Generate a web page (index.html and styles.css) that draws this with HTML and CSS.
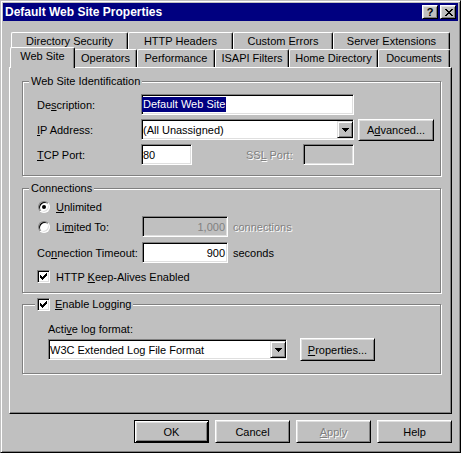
FILE: index.html
```html
<!DOCTYPE html>
<html lang="en">
<head>
<meta charset="utf-8">
<title>Default Web Site Properties</title>
<link rel="stylesheet" href="styles.css">
</head>
<body>
<div class="window">
  <div class="titlebar">
    <span class="title">Default Web Site Properties</span>
    <div class="caption-buttons">
      <span class="cap-btn cap-help">?</span>
      <span class="cap-btn cap-close">
        <svg width="8" height="7" viewBox="0 0 8 7" shape-rendering="crispEdges"><path d="M0 0h2v1H0zM6 0h2v1H6zM1 1h2v1H1zM5 1h2v1H5zM2 2h4v1H2zM3 3h2v1H3zM2 4h4v1H2zM1 5h2v1H1zM5 5h2v1H5zM0 6h2v1H0zM6 6h2v1H6z"/></svg>
      </span>
    </div>
  </div>

  <div class="client">
    <div class="tabs">
      <div class="tab-row back">
        <div class="tab t-dirsec">Directory Security</div>
        <div class="tab t-http">HTTP Headers</div>
        <div class="tab t-errors">Custom Errors</div>
        <div class="tab t-ext">Server Extensions</div>
      </div>
      <div class="tab-row front">
        <div class="tab t-site selected">Web Site</div>
        <div class="tab t-ops">Operators</div>
        <div class="tab t-perf">Performance</div>
        <div class="tab t-isapi">ISAPI Filters</div>
        <div class="tab t-home">Home Directory</div>
        <div class="tab t-docs">Documents</div>
      </div>
    </div>

    <div class="panel">
      <div class="group g-ident">
        <div class="group-label">Web Site Identification</div>
        <div class="row">
          <span class="lbl">De<u>s</u>cription:</span>
          <div class="field w-wide"><span class="sel">Default Web Site</span></div>
        </div>
        <div class="row">
          <span class="lbl"><u>I</u>P Address:</span>
          <div class="field combo w-wide">
            <span class="combo-text">(All Unassigned)</span>
            <span class="drop-btn"><svg width="7" height="4" viewBox="0 0 7 4" shape-rendering="crispEdges"><path d="M0 0h7v1H0zM1 1h5v1H1zM2 2h3v1H2zM3 3h1v1H3z"/></svg></span>
          </div>
          <span class="btn btn-adv">A<u>d</u>vanced...</span>
        </div>
        <div class="row">
          <span class="lbl"><u>T</u>CP Port:</span>
          <div class="field w-port">80</div>
          <span class="lbl-ssl disabled">SS<u>L</u> Port:</span>
          <div class="field w-port off"></div>
        </div>
      </div>

      <div class="group g-conn">
        <div class="group-label">Connections</div>
        <div class="crow r-unl">
          <span class="radio on"></span><span><u>U</u>nlimited</span>
        </div>
        <div class="crow r-lim">
          <span class="lbl2"><span class="radio"></span><span>Li<u>m</u>ited To:</span></span>
          <div class="field num off">1,000</div>
          <span class="unit disabled">connections</span>
        </div>
        <div class="crow r-time">
          <span class="lbl2">Co<u>n</u>nection Timeout:</span>
          <div class="field num">900</div>
          <span class="unit">seconds</span>
        </div>
        <div class="crow r-keep">
          <span class="check"><svg width="7" height="7" viewBox="0 0 7 7" shape-rendering="crispEdges"><path d="M6 0h1v1H6zM5 1h2v1H5zM0 2h1v1H0zM4 2h3v1H4zM0 3h2v1H0zM3 3h3v1H3zM0 4h5v1H0zM1 5h3v1H1zM2 6h1v1H2z"/></svg></span>
          <span>HTTP <u>K</u>eep-Alives Enabled</span>
        </div>
      </div>

      <div class="group g-log">
        <div class="group-label legend-check">
          <span class="check"><svg width="7" height="7" viewBox="0 0 7 7" shape-rendering="crispEdges"><path d="M6 0h1v1H6zM5 1h2v1H5zM0 2h1v1H0zM4 2h3v1H4zM0 3h2v1H0zM3 3h3v1H3zM0 4h5v1H0zM1 5h3v1H1zM2 6h1v1H2z"/></svg></span>
          <span><u>E</u>nable Logging</span>
        </div>
        <div class="log-label">Acti<u>v</u>e log format:</div>
        <div class="log-row">
          <div class="field combo w-log">
            <span class="combo-text">W3C Extended Log File Format</span>
            <span class="drop-btn"><svg width="7" height="4" viewBox="0 0 7 4" shape-rendering="crispEdges"><path d="M0 0h7v1H0zM1 1h5v1H1zM2 2h3v1H2zM3 3h1v1H3z"/></svg></span>
          </div>
          <span class="btn btn-props"><u>P</u>roperties...</span>
        </div>
      </div>
    </div>

    <div class="dialog-buttons">
      <span class="btn default">OK</span>
      <span class="btn">Cancel</span>
      <span class="btn disabled"><u>A</u>pply</span>
      <span class="btn">Help</span>
    </div>
  </div>
</div>
</body>
</html>
```

FILE: styles.css
```css
* { box-sizing: border-box; }

html, body {
  margin: 0;
  padding: 0;
}

body {
  width: 461px;
  height: 453px;
  overflow: hidden;
  background: #c0c0c0;
  color: #000;
  font: 11px "Liberation Sans", Arial, sans-serif;
}

u { text-underline-offset: 1px; }

/* Outer dialog frame */
.window {
  width: 461px;
  height: 453px;
  display: flex;
  flex-direction: column;
  padding: 2px;
  background: #c0c0c0;
  border: 1px solid;
  border-color: #c0c0c0 #000 #000 #c0c0c0;
  box-shadow: inset 1px 1px #fff, inset -1px -1px #808080;
}

.titlebar {
  height: 18px;
  flex: none;
  display: flex;
  align-items: center;
  padding: 0 2px;
  background: #000080;
  color: #fff;
}

.title {
  flex: 1;
  font-size: 12px;
  font-weight: bold;
  white-space: nowrap;
}

.caption-buttons {
  display: flex;
  gap: 2px;
}

.cap-btn {
  width: 16px;
  height: 14px;
  display: flex;
  align-items: center;
  justify-content: center;
  background: #c0c0c0;
  color: #000;
  border: 1px solid;
  border-color: #fff #000 #000 #fff;
  box-shadow: inset 1px 1px #dfdfdf, inset -1px -1px #808080;
}

.cap-help {
  font-weight: bold;
  font-size: 11px;
  line-height: 1;
}

.cap-close svg { display: block; margin-left: 1px; }

/* Dialog body */
.client {
  flex: 1;
  display: flex;
  flex-direction: column;
  padding: 11px 6px 0 6px;
}

/* Multi-row tab strip */
.tabs {
  margin-left: 2px;
  width: 439px;
}

.tab-row { display: flex; }
.tab-row.back { height: 17px; }
.tab-row.front { height: 18px; }

.tab {
  flex: none;
  height: 100%;
  background: #c0c0c0;
  border-top: 1px solid #fff;
  border-left: 1px solid #fff;
  border-right: 1px solid #000;
  border-radius: 2px 2px 0 0;
  box-shadow: inset -1px 0 #808080;
  text-align: center;
  line-height: 16px;
  white-space: nowrap;
}

.tab.selected {
  position: relative;
  z-index: 2;
  height: 21px;
  margin: -2px -1px 0 -1px;
}

.t-dirsec { width: 117px; }
.t-http   { width: 105px; }
.t-errors { width: 100px; }
.t-ext    { width: 117px; }

.t-site  { width: 65px; }
.t-ops   { width: 63px; }
.t-perf  { width: 78px; }
.t-isapi { width: 74px; }
.t-home  { width: 89px; }
.t-docs  { width: 72px; }

.panel {
  flex: none;
  width: 443px;
  height: 347px;
  padding: 13px 0 0 12px;
  border: 1px solid;
  border-color: #fff #000 #000 #fff;
  box-shadow: inset -1px -1px #808080;
}

/* Etched group boxes */
.group {
  position: relative;
  width: 419px;
  border: 1px solid #808080;
  box-shadow: inset 1px 1px #fff, 1px 1px #fff;
}

.group-label {
  position: absolute;
  top: -7px;
  left: 6px;
  padding: 0 2px;
  line-height: 13px;
  background: #c0c0c0;
  white-space: nowrap;
}

.g-ident {
  height: 95px;
  padding: 12px 0 0 14px;
}

.g-conn {
  height: 105px;
  margin-top: 12px;
  padding: 11px 0 0 14px;
}

.g-log {
  height: 70px;
  margin-top: 11px;
  padding: 18px 0 0 25px;
}

.row {
  display: flex;
  align-items: center;
  height: 21px;
}

.row + .row { margin-top: 4px; }

.lbl {
  width: 104px;
  flex: none;
}

.lbl-ssl {
  width: 57px;
  margin-left: 54px;
}

.disabled {
  color: #808080;
  text-shadow: 1px 1px #fff;
}

/* Sunken edit fields */
.field {
  height: 21px;
  flex: none;
  display: flex;
  align-items: center;
  padding: 0 2px 0 1px;
  background: #fff;
  white-space: nowrap;
  border: 1px solid;
  border-color: #808080 #fff #fff #808080;
  box-shadow: inset 1px 1px #000, inset -1px -1px #dfdfdf;
}

.field.off {
  background: #c0c0c0;
  color: #808080;
}

.w-wide { width: 213px; }
.w-port { width: 51px; }
.w-log  { width: 239px; }

.sel {
  display: inline-block;
  margin-left: -1px;
  padding: 0 1px;
  line-height: 15px;
  background: #000080;
  color: #fff;
}

.combo { padding-right: 0; }

.combo-text { flex: 1; }

.drop-btn {
  width: 16px;
  height: 17px;
  display: flex;
  align-items: center;
  justify-content: center;
  background: #c0c0c0;
  border: 1px solid;
  border-color: #dfdfdf #000 #000 #dfdfdf;
  box-shadow: inset 1px 1px #fff, inset -1px -1px #808080;
}

.drop-btn svg { display: block; }

/* Push buttons */
.btn {
  width: 75px;
  height: 23px;
  flex: none;
  display: flex;
  align-items: center;
  justify-content: center;
  background: #c0c0c0;
  white-space: nowrap;
  border: 1px solid;
  border-color: #fff #000 #000 #fff;
  box-shadow: inset 1px 1px #dfdfdf, inset -1px -1px #808080;
}

.btn.default {
  border-color: #000;
  box-shadow: inset 1px 1px #fff, inset -1px -1px #000, inset 2px 2px #dfdfdf, inset -2px -2px #808080;
}

.btn-adv {
  width: 76px;
  height: 22px;
  margin-left: 4px;
  align-self: flex-start;
}

.btn-props { margin-left: 13px; }

/* Connections group */
.crow {
  display: flex;
  align-items: center;
}

.r-unl  { height: 13px; }
.r-lim  { height: 21px; margin-top: 3px; }
.r-time { height: 21px; margin-top: 5px; }
.r-keep { height: 13px; margin-top: 7px; }

.lbl2 {
  width: 105px;
  flex: none;
  display: flex;
  align-items: center;
}

.num {
  width: 86px;
  justify-content: flex-end;
}

.unit { margin-left: 5px; }

.radio {
  position: relative;
  flex: none;
  width: 12px;
  height: 12px;
  margin: 0 6px 0 1px;
  border-radius: 50%;
  background: #fff;
  border: 1px solid;
  border-color: #808080 #fff #fff #808080;
  box-shadow: inset 1px 1px #000, inset -1px -1px #dfdfdf;
}

.radio.on::after {
  content: "";
  position: absolute;
  left: 3px;
  top: 3px;
  width: 4px;
  height: 4px;
  border-radius: 50%;
  background: #000;
}

.check {
  flex: none;
  width: 13px;
  height: 13px;
  margin-right: 6px;
  display: flex;
  align-items: center;
  justify-content: center;
  background: #fff;
  border: 1px solid;
  border-color: #808080 #fff #fff #808080;
  box-shadow: inset 1px 1px #000, inset -1px -1px #dfdfdf;
}

.check svg { display: block; }

/* Logging group */
.legend-check {
  left: 12px;
  display: flex;
  align-items: center;
  height: 13px;
}

.legend-check .check { margin-right: 5px; }

.log-label { line-height: 13px; }

.log-row {
  display: flex;
  align-items: center;
  height: 23px;
  margin-top: 2px;
}

/* Bottom command buttons */
.dialog-buttons {
  display: flex;
  justify-content: flex-end;
  gap: 6px;
  margin-top: 6px;
}
```
